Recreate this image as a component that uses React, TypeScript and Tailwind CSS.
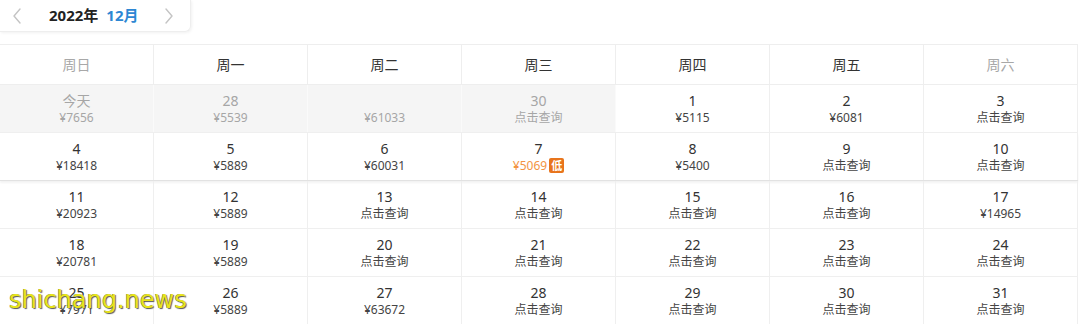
import React from "react";

type Cell = { d: string; p: string; grey?: boolean; low?: boolean; hideDate?: boolean };

const rows: Cell[][] = [
  [
    { d: "今天", p: "¥7656", grey: true },
    { d: "28", p: "¥5539", grey: true },
    { d: "29", p: "¥61033", grey: true, hideDate: true },
    { d: "30", p: "点击查询", grey: true },
    { d: "1", p: "¥5115" },
    { d: "2", p: "¥6081" },
    { d: "3", p: "点击查询" },
  ],
  [
    { d: "4", p: "¥18418" },
    { d: "5", p: "¥5889" },
    { d: "6", p: "¥60031" },
    { d: "7", p: "¥5069", low: true },
    { d: "8", p: "¥5400" },
    { d: "9", p: "点击查询" },
    { d: "10", p: "点击查询" },
  ],
  [
    { d: "11", p: "¥20923" },
    { d: "12", p: "¥5889" },
    { d: "13", p: "点击查询" },
    { d: "14", p: "点击查询" },
    { d: "15", p: "点击查询" },
    { d: "16", p: "点击查询" },
    { d: "17", p: "¥14965" },
  ],
  [
    { d: "18", p: "¥20781" },
    { d: "19", p: "¥5889" },
    { d: "20", p: "点击查询" },
    { d: "21", p: "点击查询" },
    { d: "22", p: "点击查询" },
    { d: "23", p: "点击查询" },
    { d: "24", p: "点击查询" },
  ],
  [
    { d: "25", p: "¥7971" },
    { d: "26", p: "¥5889" },
    { d: "27", p: "¥63672" },
    { d: "28", p: "点击查询" },
    { d: "29", p: "点击查询" },
    { d: "30", p: "点击查询" },
    { d: "31", p: "点击查询" },
  ],
];

const heads = ["周日", "周一", "周二", "周三", "周四", "周五", "周六"];

function Chevron({ dir }: { dir: "l" | "r" }) {
  return (
    <svg width="10" height="16" viewBox="0 0 10 16" fill="none">
      <path
        d={dir === "l" ? "M8 1 L2 8 L8 15" : "M2 1 L8 8 L2 15"}
        stroke="#c4c4c4"
        strokeWidth="1.4"
        strokeLinecap="round"
        strokeLinejoin="round"
      />
    </svg>
  );
}

export default function App() {
  return (
    <div
      className="relative w-[1080px] h-[324px] overflow-hidden bg-white"
      style={{ fontFamily: '"Noto Sans", "Noto Sans CJK SC", sans-serif' }}
    >
      <div className="flex items-center w-[191px] h-[32px] rounded-br-[6px] border-r border-b border-[#eeeeee] shadow-[1px_1px_3px_rgba(0,0,0,0.06)]">
        <div className="w-[34px] flex justify-center">
          <Chevron dir="l" />
        </div>
        <div className="flex items-center gap-[8px] ml-[15px] text-[15px] font-bold leading-none">
          <span className="text-[#222]">2022年</span>
          <span className="text-[#2d87d3]">12月</span>
        </div>
        <div className="ml-[25px] flex justify-center">
          <Chevron dir="r" />
        </div>
      </div>

      <div className="mt-[12px] w-[1078px] border-t border-[#eeeeee]">
        <div className="grid grid-cols-[repeat(7,154px)] h-[40px] border-b border-[#eeeeee]">
          {heads.map((h, i) => (
            <div
              key={h}
              className={`flex items-center justify-center text-[14px] border-r border-[#eeeeee] ${
                i === 0 || i === 6 ? "text-[#a8a8a8]" : "text-[#333]"
              }`}
            >
              {h}
            </div>
          ))}
        </div>
        {rows.map((r, ri) => (
          <div
            key={ri}
            className={`grid grid-cols-[repeat(7,154px)] h-[48px] border-b ${
              ri === 1 ? "border-[#e2e2e2] shadow-[0_2px_2px_rgba(0,0,0,0.05)]" : "border-[#efefef]"
            }`}
          >
            {r.map((c, ci) => (
              <div
                key={ci}
                className={`flex flex-col items-center justify-center border-r ${
                  c.grey ? "bg-[#f5f5f5] border-[#fafafa]" : "border-[#efefef]"
                }`}
              >
                <div
                  className={`text-[14px] leading-[18px] ${
                    c.grey ? "text-[#a6a6a6]" : "text-[#333]"
                  } ${c.hideDate ? "invisible" : ""}`}
                >
                  {c.d}
                </div>
                <div
                  className={`flex items-center gap-[2px] text-[12px] leading-[16px] ${
                    c.grey ? "text-[#a6a6a6]" : c.low ? "text-[#f39443]" : "text-[#444]"
                  }`}
                >
                  <span>{c.p}</span>
                  {c.low && (
                    <span className="inline-flex items-center justify-center w-[15px] h-[15px] rounded-[2px] bg-[#e8741c] text-white text-[11px] font-bold leading-none">
                      低
                    </span>
                  )}
                </div>
              </div>
            ))}
          </div>
        ))}
      </div>

      <div
        className="absolute left-[9px] top-[288px] text-[24px] leading-none text-[#e8e41a]"
        style={{
          fontFamily: '"DejaVu Sans", sans-serif',
          textShadow: "1px 1px 1px #555, -0.5px -0.5px 0 #777",
        }}
      >
        shichang.news
      </div>
    </div>
  );
}
